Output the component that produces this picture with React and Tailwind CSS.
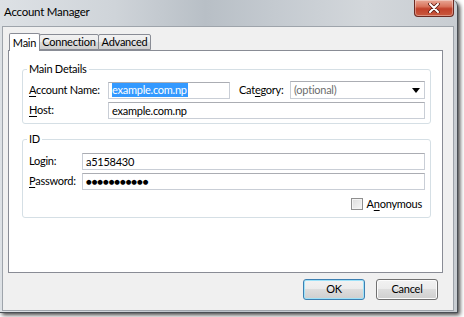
import React from "react";

const font = { fontFamily: "Lato, 'Noto Sans', sans-serif" };

function Field({ w, h = "h-[17px]", children, className = "" }) {
  return (
    <div
      className={`${w} ${h} ${className} border border-[#c9ced6] border-t-[#abadb3] bg-white flex items-center pl-[3px] leading-[14px] text-black whitespace-nowrap`}
    >
      {children}
    </div>
  );
}

function Btn({ children, def }) {
  return (
    <div
      className={`w-[62px] h-[21px] rounded-[3px] border ${
        def ? "border-[#3c7fb1] shadow-[inset_0_0_0_1px_#9ee2f9]" : "border-[#707070] shadow-[inset_0_0_0_1px_#fcfcfc]"
      } bg-[linear-gradient(180deg,#f2f2f2_0%,#ebebeb_50%,#dddddd_50%,#cfcfcf_100%)] flex items-center justify-center text-black`}
    >
      {children}
    </div>
  );
}

export default function App() {
  return (
    <div className="w-[464px] h-[317px] bg-white overflow-hidden text-[11px] tracking-[-0.25px] whitespace-nowrap" style={font}>
      <div className="w-[458px] h-[313px] flex flex-col rounded-tr-[6px] border-r border-b border-[#4a4f55] shadow-[2px_2px_4px_rgba(0,0,0,0.75)] bg-[linear-gradient(90deg,#dde1e5_0%,#cfd4d9_25%,#b8bfc6_45%,#c4cad0_60%,#d3d7db_80%,#c8cdd2_100%)]">
        {/* Title bar */}
        <div className="h-[26px] flex items-start justify-between">
          <div className="pl-[4px] pt-[4px] leading-[16px] text-black text-[11.5px]">Account Manager</div>
          <div className="mr-[3px] w-[40px] h-[17px] rounded-b-[4px] border border-t-0 border-[#6b2a22] bg-[linear-gradient(180deg,#e8a796_0%,#d9745d_40%,#c1412b_55%,#c95a3f_100%)] flex items-center justify-center shadow-[inset_0_0_0_1px_rgba(255,255,255,0.35)]">
            <svg width="12" height="10" viewBox="0 0 12 10">
              <path d="M2 1 L10 9 M10 1 L2 9" stroke="#5a1a12" strokeWidth="3.6" strokeLinecap="round" />
              <path d="M2 1 L10 9 M10 1 L2 9" stroke="#ffffff" strokeWidth="2" strokeLinecap="round" />
            </svg>
          </div>
        </div>
        {/* Client area */}
        <div className="ml-[2px] w-[452px] h-[285px] border border-[#9ea4ab] bg-[#f0f0f0] pt-[5px] pl-[5px] flex flex-col text-black">
          {/* Tabs */}
          <div className="flex items-end h-[18px] pl-[1px] relative z-10">
            <div className="w-[31px] h-[18px] -mb-px bg-white border border-b-0 border-[#898c95] rounded-t-[2px] flex items-center justify-center leading-[14px]">
              Main
            </div>
            <div className="w-[60px] h-[16px] -ml-px border border-[#898c95] rounded-t-[2px] bg-[linear-gradient(180deg,#f2f2f2_0%,#ebebeb_50%,#dddddd_50%,#cfcfcf_100%)] flex items-center justify-center leading-[14px]">
              Connection
            </div>
            <div className="w-[53px] h-[16px] -ml-px border border-[#898c95] rounded-t-[2px] bg-[linear-gradient(180deg,#f2f2f2_0%,#ebebeb_50%,#dddddd_50%,#cfcfcf_100%)] flex items-center justify-center leading-[14px]">
              Advanced
            </div>
          </div>
          {/* Panel */}
          <div className="w-[435px] h-[223px] bg-white border border-[#898c95] pl-[13px] pt-[10px]">
            <fieldset className="w-[409px] border border-[#d5dfe5] rounded-[3px] pl-[6px] pb-[4px]">
              <legend className="-ml-[2px] px-[2px] leading-[16px]">Main Details</legend>
              <div className="mt-[4px] flex items-center">
                <div className="w-[79px]">
                  <span className="underline underline-offset-2">A</span>ccount Name:
                </div>
                <Field w="w-[122px]">
                  <span className="bg-[#3399ff] text-white leading-[14px] pr-[1px]">example.com.np</span>
                </Field>
                <div className="ml-[9px] w-[51px]">
                  Cat<span className="underline underline-offset-2">e</span>gory:
                </div>
                <Field w="w-[135px]" h="h-[18px]" className="justify-between pr-[4px]">
                  <span className="text-[#6d6d6d]">(optional)</span>
                  <svg width="8" height="5" viewBox="0 0 8 5">
                    <path d="M0 0 H8 L4 5 Z" fill="#000" />
                  </svg>
                </Field>
              </div>
              <div className="mt-[3px] flex items-center">
                <div className="w-[79px]">
                  <span className="underline underline-offset-2">H</span>ost:
                </div>
                <Field w="w-[317px]">example.com.np</Field>
              </div>
            </fieldset>
            <fieldset className="mt-[7px] w-[409px] border border-[#d5dfe5] rounded-[3px] pl-[6px] pb-[6px]">
              <legend className="-ml-[2px] px-[2px] leading-[16px]">ID</legend>
              <div className="mt-[6px] flex items-center">
                <div className="w-[53px]">Login:</div>
                <Field w="w-[343px]">a5158430</Field>
              </div>
              <div className="mt-[3px] flex items-center">
                <div className="w-[53px]">
                  <span className="underline underline-offset-2">P</span>assword:
                </div>
                <Field w="w-[343px]">
                  <span className="text-[6.5px] tracking-[0px] leading-[8px]" style={{ fontFamily: "'DejaVu Sans', sans-serif" }}>
                    ●●●●●●●●●●●
                  </span>
                </Field>
              </div>
              <div className="mt-[7px] flex items-center justify-end pr-[8px]">
                <div className="w-[12px] h-[12px] border border-[#8f8f8f] bg-[linear-gradient(135deg,#dcdcdc_0%,#f6f6f6_100%)] shadow-[inset_0_0_0_1px_#f4f4f4]" />
                <div className="ml-[4px] leading-[14px]">
                  A<span className="underline underline-offset-2">n</span>onymous
                </div>
              </div>
            </fieldset>
          </div>
          {/* Buttons */}
          <div className="mt-[6px] ml-[295px] flex gap-[11px]">
            <Btn def>OK</Btn>
            <Btn>Cancel</Btn>
          </div>
        </div>
      </div>
    </div>
  );
}
